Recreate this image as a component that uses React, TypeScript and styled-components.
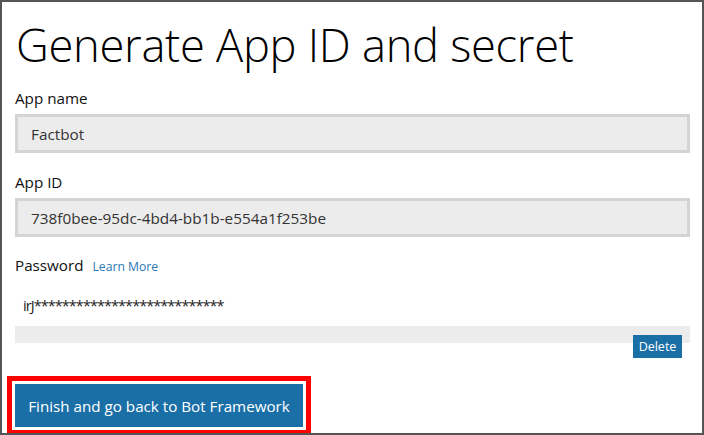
import React from "react";
import styled, { createGlobalStyle } from "styled-components";

const Global = createGlobalStyle`
  html, body { margin: 0; padding: 0; background: #fff; }
  * { box-sizing: border-box; }
`;

const Frame = styled.div`
  width: 704px;
  height: 435px;
  border: 2px solid #555555;
  padding: 0 12px 0 13px;
  display: flex;
  flex-direction: column;
  font-family: "Open Sans", "Noto Sans", sans-serif;
  color: #111;
  overflow: hidden;
`;

const Title = styled.h1`
  margin: 15px 0 0 1px;
  font-size: 45.3px;
  line-height: 56px;
  font-weight: 300;
  color: #000;
  letter-spacing: -0.3px;
`;

const LabelRow = styled.div<{ $top: number }>`
  margin-top: ${(p) => p.$top}px;
  display: flex;
  align-items: baseline;
  gap: 9px;
  height: 20px;
`;

const Label = styled.span`
  font-size: 15.2px;
  line-height: 20px;
  color: #111;
`;

const Link = styled.a`
  font-size: 12.2px;
  color: #2a78b5;
  text-decoration: none;
`;

const Field = styled.div`
  margin-top: 6px;
  height: 39px;
  background: #ececec;
  border: 3px solid #d4d4d4;
  padding: 0 13px;
  display: flex;
  align-items: center;
  font-size: 15.3px;
  color: #333;
`;

const Secret = styled.div`
  margin-top: 21px;
  padding-left: 8px;
  font-size: 14.5px;
  line-height: 20px;
  color: #222;
  letter-spacing: -0.95px;
`;

const Bar = styled.div`
  margin-top: 10px;
  height: 17px;
  background: #ececec;
`;

const BarActions = styled.div`
  margin-top: -8px;
  display: flex;
  justify-content: flex-end;
  padding-right: 8px;
`;

const SmallButton = styled.button`
  height: 23px;
  width: 49px;
  border: none;
  background: #1a6fa7;
  color: #fff;
  font-family: inherit;
  font-size: 12.5px;
  padding: 0;
  cursor: pointer;
`;

const PrimaryButton = styled.button`
  margin-top: 26px;
  align-self: flex-start;
  width: 288px;
  height: 43px;
  border: none;
  background: #1a6fa7;
  color: #fff;
  font-family: inherit;
  font-size: 15.2px;
  padding: 0;
  outline: 5px solid #ff0000;
  outline-offset: 3px;
  cursor: pointer;
`;

export default function App() {
  return (
    <>
      <Global />
      <Frame>
        <Title>Generate App ID and secret</Title>
        <LabelRow $top={15}>
          <Label>App name</Label>
        </LabelRow>
        <Field>Factbot</Field>
        <LabelRow $top={19}>
          <Label>App ID</Label>
        </LabelRow>
        <Field>738f0bee-95dc-4bd4-bb1b-e554a1f253be</Field>
        <LabelRow $top={18}>
          <Label>Password</Label>
          <Link href="#">Learn More</Link>
        </LabelRow>
        <Secret>irJ***************************</Secret>
        <Bar />
        <BarActions>
          <SmallButton>Delete</SmallButton>
        </BarActions>
        <PrimaryButton>Finish and go back to Bot Framework</PrimaryButton>
      </Frame>
    </>
  );
}
